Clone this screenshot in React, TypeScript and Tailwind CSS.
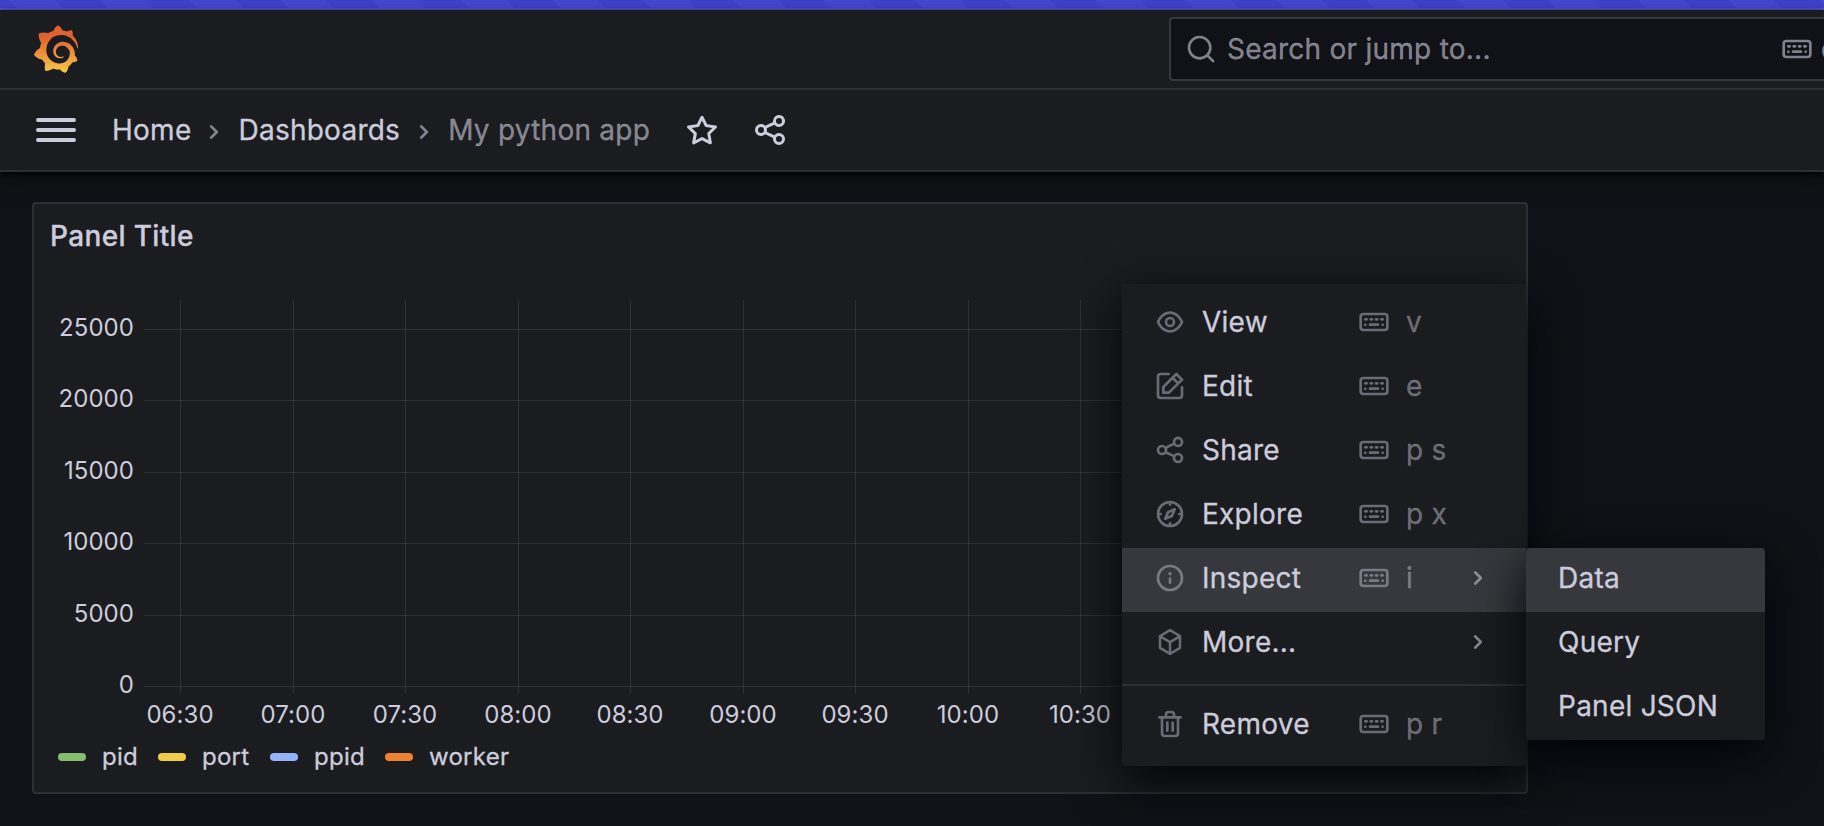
import React from "react";

const ICONS: Record<string, string> = {
  star: "M22,9.67A1,1,0,0,0,21.14,9l-5.69-.83L12.9,3a1,1,0,0,0-1.8,0L8.55,8.16,2.86,9a1,1,0,0,0-.81.68,1,1,0,0,0,.25,1l4.13,4-1,5.68A1,1,0,0,0,6.9,21.44L12,18.77l5.1,2.67a.93.93,0,0,0,.46.12,1,1,0,0,0,.59-.19,1,1,0,0,0,.4-1l-1-5.68,4.13-4A1,1,0,0,0,22,9.67Zm-6.15,4a1,1,0,0,0-.29.88l.72,4.2-3.76-2a1.06,1.06,0,0,0-.94,0l-3.76,2,.72-4.2a1,1,0,0,0-.29-.88l-3-3,4.21-.61a1,1,0,0,0,.76-.55L12,5.7l1.88,3.82a1,1,0,0,0,.76.55l4.21.61Z",
  share: "M18,14a4,4,0,0,0-3.08,1.48l-5.1-2.35a3.64,3.64,0,0,0,0-2.26l5.1-2.35A4,4,0,1,0,14,6a4.17,4.17,0,0,0,.07.71L8.79,9.14a4,4,0,1,0,0,5.72l5.28,2.43A4.17,4.17,0,0,0,14,18a4,4,0,1,0,4-4ZM18,4a2,2,0,1,1-2,2A2,2,0,0,1,18,4ZM6,14a2,2,0,1,1,2-2A2,2,0,0,1,6,14Zm12,6a2,2,0,1,1,2-2A2,2,0,0,1,18,20Z",
  search: "M21.71,20.29,18,16.61A9,9,0,1,0,16.61,18l3.68,3.68a1,1,0,0,0,1.42,0A1,1,0,0,0,21.71,20.29ZM11,18a7,7,0,1,1,7-7A7,7,0,0,1,11,18Z",
  angle: "M14.83,11.29,10.59,7.05a1,1,0,0,0-1.42,0,1,1,0,0,0,0,1.41L12.71,12,9.17,15.54a1,1,0,0,0,0,1.41,1,1,0,0,0,.71.29,1,1,0,0,0,.71-.29l4.24-4.24A1,1,0,0,0,14.83,11.29Z",
  eye: "M21.92,11.6C19.9,6.91,16.1,4,12,4S4.1,6.91,2.08,11.6a1,1,0,0,0,0,.8C4.1,17.09,7.9,20,12,20s7.9-2.91,9.92-7.6A1,1,0,0,0,21.92,11.6ZM12,18c-3.17,0-6.17-2.29-7.9-6C5.83,8.29,8.83,6,12,6s6.17,2.29,7.9,6C18.17,15.71,15.17,18,12,18ZM12,8a4,4,0,1,0,4,4A4,4,0,0,0,12,8Zm0,6a2,2,0,1,1,2-2A2,2,0,0,1,12,14Z",
  edit: "M21,12a1,1,0,0,0-1,1v6a1,1,0,0,1-1,1H5a1,1,0,0,1-1-1V5A1,1,0,0,1,5,4h6a1,1,0,0,0,0-2H5A3,3,0,0,0,2,5V19a3,3,0,0,0,3,3H19a3,3,0,0,0,3-3V13A1,1,0,0,0,21,12ZM6,12.76V17a1,1,0,0,0,1,1h4.24a1,1,0,0,0,.71-.29l6.92-6.93h0L21.71,8a1,1,0,0,0,0-1.42L17.47,2.29a1,1,0,0,0-1.42,0L13.23,5.12h0L6.29,12.05A1,1,0,0,0,6,12.76ZM16.76,4.41l2.83,2.83L18.17,8.66,15.34,5.83ZM8,13.17l5.93-5.93,2.83,2.83L10.83,16H8Z",
  compass: "M12,2A10,10,0,1,0,22,12,10,10,0,0,0,12,2Zm1,17.93V19a1,1,0,0,0-2,0v.93A8,8,0,0,1,4.07,13H5a1,1,0,0,0,0-2H4.07A8,8,0,0,1,11,4.07V5a1,1,0,0,0,2,0V4.07A8,8,0,0,1,19.93,11H19a1,1,0,0,0,0,2h.93A8,8,0,0,1,13,19.93ZM15.14,7.55l-5,2.12a1,1,0,0,0-.52.52l-2.12,5a1,1,0,0,0,.21,1.1,1,1,0,0,0,.7.29.93.93,0,0,0,.4-.09l5-2.12a1,1,0,0,0,.52-.52l2.12-5a1,1,0,0,0-1.31-1.31Zm-2.49,5.1-2.28,1,1-2.28,2.28-1Z",
  info: "M12,2A10,10,0,1,0,22,12,10.01114,10.01114,0,0,0,12,2Zm0,18a8,8,0,1,1,8-8A8.00917,8.00917,0,0,1,12,20Zm0-8.5a1,1,0,0,0-1,1v3a1,1,0,0,0,2,0v-3A1,1,0,0,0,12,11.5Zm0-4a1.25,1.25,0,1,0,1.25,1.25A1.25,1.25,0,0,0,12,7.5Z",
  trash: "M10,18a1,1,0,0,0,1-1V11a1,1,0,0,0-2,0v6A1,1,0,0,0,10,18ZM20,6H16V5a3,3,0,0,0-3-3H11A3,3,0,0,0,8,5V6H4A1,1,0,0,0,4,8H5V19a3,3,0,0,0,3,3h8a3,3,0,0,0,3-3V8h1a1,1,0,0,0,0-2ZM10,5a1,1,0,0,1,1-1h2a1,1,0,0,1,1,1V6H10Zm7,14a1,1,0,0,1-1,1H8a1,1,0,0,1-1-1V8H17Zm-3-1a1,1,0,0,0,1-1V11a1,1,0,0,0-2,0v6A1,1,0,0,0,14,18Z",
  keyboard: "M6.21,13.29a.93.93,0,0,0-.33-.21,1,1,0,0,0-.76,0,.9.9,0,0,0-.54.54,1,1,0,1,0,1.84,0A1,1,0,0,0,6.21,13.29ZM13.5,11h1a1,1,0,0,0,0-2h-1a1,1,0,0,0,0,2Zm-4,0h1a1,1,0,0,0,0-2h-1a1,1,0,0,0,0,2Zm-3-2h-1a1,1,0,0,0,0,2h1a1,1,0,0,0,0-2ZM20,5H4A3,3,0,0,0,1,8v8a3,3,0,0,0,3,3H20a3,3,0,0,0,3-3V8A3,3,0,0,0,20,5Zm1,11a1,1,0,0,1-1,1H4a1,1,0,0,1-1-1V8A1,1,0,0,1,4,7H20a1,1,0,0,1,1,1Zm-6-3H9a1,1,0,0,0,0,2h6a1,1,0,0,0,0-2Zm3.5-4h-1a1,1,0,0,0,0,2h1a1,1,0,0,0,0-2Zm.71,4.29a1,1,0,0,0-.33-.21,1,1,0,0,0-.76,0,.93.93,0,0,0-.33.21,1,1,0,0,0-.21.33A1,1,0,1,0,19.5,14a.84.84,0,0,0-.08-.38A1,1,0,0,0,19.21,13.29Z",
};

function Icon({ name, className }: { name: string; className: string }) {
  if (name === "cube") {
    return (
      <svg
        viewBox="0 0 24 24"
        fill="none"
        stroke="currentColor"
        strokeWidth="1.9"
        strokeLinecap="round"
        strokeLinejoin="round"
        className={`shrink-0 ${className}`}
      >
        <path d="M12,3.1L19.5,7.6V16.4L12,20.9L4.5,16.4V7.6ZM4.7,7.8L12,12.1L19.3,7.8M12,12.1V20.6" />
      </svg>
    );
  }
  return (
    <svg viewBox="0 0 24 24" fill="currentColor" className={`shrink-0 ${className}`}>
      <path d={ICONS[name]} />
    </svg>
  );
}

function Logo() {
  return (
    <svg viewBox="0 0 351 365" className="size-12">
      <defs>
        <linearGradient id="flame" gradientUnits="userSpaceOnUse" x1="175.5" x2="175.5" y1="400" y2="95">
          <stop offset="0" stopColor="#f8d849" />
          <stop offset="1" stopColor="#e2622f" />
        </linearGradient>
      </defs>
      <path
        fill="url(#flame)"
        d="M342,161.2c-0.6-6.1-1.6-13.1-3.6-20.9c-2-7.7-5-16.2-9.4-25c-4.4-8.8-10.1-17.9-17.5-26.8c-2.9-3.5-6.1-6.9-9.5-10.2c5.1-20.3-6.2-37.9-6.2-37.9c-19.5-1.2-31.9,6.1-36.5,9.4c-0.8-0.3-1.5-0.7-2.3-1c-3.3-1.3-6.7-2.6-10.3-3.7c-3.5-1.1-7.1-2.1-10.8-3c-3.7-0.9-7.4-1.6-11.2-2.2c-0.7-0.1-1.3-0.2-2-0.3c-8.5-27.2-32.9-38.6-32.9-38.6c-27.3,17.3-32.4,41.5-32.4,41.5s-0.1,0.5-0.3,1.4c-1.5,0.4-3,0.9-4.5,1.3c-2.1,0.6-4.2,1.4-6.2,2.2c-2.1,0.8-4.1,1.6-6.2,2.5c-4.1,1.8-8.2,3.8-12.2,6c-3.9,2.2-7.7,4.6-11.4,7.1c-0.5-0.2-1-0.4-1-0.4c-37.8-14.4-71.3,2.9-71.3,2.9c-3.1,40.2,15.1,65.5,18.7,70.1c-0.9,2.5-1.7,5-2.5,7.5c-2.8,9.1-4.9,18.4-6.2,28.1c-0.2,1.4-0.4,2.8-0.5,4.2C18.8,192.7,8.5,228,8.5,228c29.1,33.5,63.1,35.6,63.1,35.6c0,0,0.1-0.1,0.1-0.1c4.3,7.7,9.3,15,14.9,21.9c2.4,2.9,4.8,5.6,7.4,8.3c-10.6,30.4,1.5,55.6,1.5,55.6c32.4,1.2,53.7-14.2,58.2-17.7c3.2,1.1,6.5,2.1,9.8,2.9c10,2.6,20.2,4.1,30.4,4.5c2.5,0.1,5.1,0.2,7.6,0.1l1.2,0l0.8,0l1.6,0l1.6-0.1l0,0.1c15.3,21.8,42.1,24.9,42.1,24.9c19.1-20.1,20.2-40.1,20.2-44.4l0,0c0,0,0-0.1,0-0.3c0-0.4,0-0.6,0-0.6l0,0c0-0.3,0-0.6,0-0.9c4-2.8,7.8-5.8,11.4-9.1c7.6-6.9,14.3-14.8,19.9-23.3c0.5-0.8,1-1.6,1.5-2.4c21.6,1.2,36.9-13.4,36.9-13.4c-3.6-22.5-16.4-33.5-19.1-35.6l0,0c0,0-0.1-0.1-0.3-0.2c-0.2-0.1-0.2-0.2-0.2-0.2c0,0,0,0,0,0c-0.1-0.1-0.3-0.2-0.5-0.3c0.1-1.4,0.2-2.7,0.3-4.1c0.2-2.4,0.2-4.9,0.2-7.3l0-1.8l0-0.9l0-0.5c0-0.6,0-0.4,0-0.6l-0.1-1.5l-0.1-2c0-0.7-0.1-1.3-0.2-1.9c-0.1-0.6-0.1-1.3-0.2-1.9l-0.2-1.9l-0.3-1.9c-0.4-2.5-0.8-4.9-1.4-7.4c-2.3-9.7-6.1-18.9-11-27.2c-5-8.3-11.2-15.6-18.3-21.8c-7-6.2-14.9-11.2-23.1-14.9c-8.3-3.7-16.9-6.1-25.5-7.2c-4.3-0.6-8.6-0.8-12.9-0.7l-1.6,0l-0.4,0c-0.1,0-0.6,0-0.5,0l-0.7,0l-1.6,0.1c-0.6,0-1.2,0.1-1.7,0.1c-2.2,0.2-4.4,0.5-6.5,0.9c-8.6,1.6-16.7,4.7-23.8,9c-7.1,4.3-13.3,9.6-18.3,15.6c-5,6-8.9,12.7-11.6,19.6c-2.7,6.9-4.2,14.1-4.6,21c-0.1,1.7-0.1,3.5-0.1,5.2c0,0.4,0,0.9,0,1.3l0.1,1.4c0.1,0.8,0.1,1.7,0.2,2.5c0.3,3.5,1,6.9,1.9,10.1c1.9,6.5,4.9,12.4,8.6,17.4c3.7,5,8.2,9.1,12.9,12.4c4.7,3.2,9.8,5.5,14.8,7c5,1.5,10,2.1,14.7,2.1c0.6,0,1.2,0,1.7,0c0.3,0,0.6,0,0.9,0c0.3,0,0.6,0,0.9-0.1c0.5,0,1-0.1,1.5-0.1c0.1,0,0.3,0,0.4-0.1l0.5-0.1c0.3,0,0.6-0.1,0.9-0.1c0.6-0.1,1.1-0.2,1.7-0.3c0.6-0.1,1.1-0.2,1.6-0.4c1.1-0.2,2.1-0.6,3.1-0.9c2-0.7,4-1.5,5.7-2.4c1.8-0.9,3.4-2,5-3c0.4-0.3,0.9-0.6,1.3-1c1.6-1.3,1.9-3.7,0.6-5.3c-1.1-1.4-3.1-1.8-4.7-0.9c-0.4,0.2-0.8,0.4-1.2,0.6c-1.4,0.7-2.8,1.3-4.3,1.8c-1.5,0.5-3.1,0.9-4.7,1.2c-0.8,0.1-1.6,0.2-2.5,0.3c-0.4,0-0.8,0.1-1.3,0.1c-0.4,0-0.9,0-1.2,0c-0.4,0-0.8,0-1.2,0c-0.5,0-1,0-1.5-0.1c0,0-0.3,0-0.1,0l-0.2,0l-0.3,0c-0.2,0-0.5,0-0.7-0.1c-0.5-0.1-0.9-0.1-1.4-0.2c-3.7-0.5-7.4-1.6-10.9-3.2c-3.6-1.6-7-3.8-10.1-6.6c-3.1-2.8-5.8-6.1-7.9-9.9c-2.1-3.8-3.6-8-4.3-12.4c-0.3-2.2-0.5-4.5-0.4-6.7c0-0.6,0.1-1.2,0.1-1.8c0,0.2,0-0.1,0-0.1l0-0.2l0-0.5c0-0.3,0.1-0.6,0.1-0.9c0.1-1.2,0.3-2.4,0.5-3.6c1.7-9.6,6.5-19,13.9-26.1c1.9-1.8,3.9-3.4,6-4.9c2.1-1.5,4.4-2.8,6.8-3.9c2.4-1.1,4.8-2,7.4-2.7c2.5-0.7,5.1-1.1,7.8-1.4c1.3-0.1,2.6-0.2,4-0.2c0.4,0,0.6,0,0.9,0l1.1,0l0.7,0c0.3,0,0,0,0.1,0l0.3,0l1.1,0.1c2.9,0.2,5.7,0.6,8.5,1.3c5.6,1.2,11.1,3.3,16.2,6.1c10.2,5.7,18.9,14.5,24.2,25.1c2.7,5.3,4.6,11,5.5,16.9c0.2,1.5,0.4,3,0.5,4.5l0.1,1.1l0.1,1.1c0,0.4,0,0.8,0,1.1c0,0.4,0,0.8,0,1.1l0,1l0,1.1c0,0.7-0.1,1.9-0.1,2.6c-0.1,1.6-0.3,3.3-0.5,4.9c-0.2,1.6-0.5,3.2-0.8,4.8c-0.3,1.6-0.7,3.2-1.1,4.7c-0.8,3.1-1.8,6.2-3,9.3c-2.4,6-5.6,11.8-9.4,17.1c-7.7,10.6-18.2,19.2-30.2,24.7c-6,2.7-12.3,4.7-18.8,5.7c-3.2,0.6-6.5,0.9-9.8,1l-0.6,0l-0.5,0l-1.1,0l-1.6,0l-0.8,0c0.4,0-0.1,0-0.1,0l-0.3,0c-1.8,0-3.5-0.1-5.3-0.3c-7-0.5-13.9-1.8-20.7-3.7c-6.7-1.9-13.2-4.6-19.4-7.8c-12.3-6.6-23.4-15.6-32-26.5c-4.3-5.4-8.1-11.3-11.2-17.4c-3.1-6.1-5.6-12.6-7.4-19.1c-1.8-6.6-2.9-13.3-3.4-20.1l-0.1-1.3l0-0.3l0-0.3l0-0.6l0-1.1l0-0.3l0-0.4l0-0.8l0-1.6l0-0.3c0,0,0,0.1,0-0.1l0-0.6c0-0.8,0-1.7,0-2.5c0.1-3.3,0.4-6.8,0.8-10.2c0.4-3.4,1-6.9,1.7-10.3c0.7-3.4,1.5-6.8,2.5-10.2c1.9-6.7,4.3-13.2,7.1-19.3c5.7-12.2,13.1-23.1,22-31.8c2.2-2.2,4.5-4.2,6.9-6.2c2.4-1.9,4.9-3.7,7.5-5.4c2.5-1.7,5.2-3.2,7.9-4.6c1.3-0.7,2.7-1.4,4.1-2c0.7-0.3,1.4-0.6,2.1-0.9c0.7-0.3,1.4-0.6,2.1-0.9c2.8-1.2,5.7-2.2,8.7-3.1c0.7-0.2,1.5-0.4,2.2-0.7c0.7-0.2,1.5-0.4,2.2-0.6c1.5-0.4,3-0.8,4.5-1.1c0.7-0.2,1.5-0.3,2.3-0.5c0.8-0.2,1.5-0.3,2.3-0.5c0.8-0.1,1.5-0.3,2.3-0.4l1.1-0.2l1.2-0.2c0.8-0.1,1.5-0.2,2.3-0.3c0.9-0.1,1.7-0.2,2.6-0.3c0.7-0.1,1.9-0.2,2.6-0.3c0.5-0.1,1.1-0.1,1.6-0.2l1.1-0.1l0.5-0.1l0.6,0c0.9-0.1,1.7-0.1,2.6-0.2l1.3-0.1c0,0,0.5,0,0.1,0l0.3,0l0.6,0c0.7,0,1.5-0.1,2.2-0.1c2.9-0.1,5.9-0.1,8.8,0c5.8,0.2,11.5,0.9,17,1.9c11.1,2.1,21.5,5.6,31,10.3c9.5,4.6,17.9,10.3,25.3,16.5c0.5,0.4,0.9,0.8,1.4,1.2c0.4,0.4,0.9,0.8,1.3,1.2c0.9,0.8,1.7,1.6,2.6,2.4c0.9,0.8,1.7,1.6,2.5,2.4c0.8,0.8,1.6,1.6,2.4,2.5c3.1,3.3,6,6.6,8.6,10c5.2,6.7,9.4,13.5,12.7,19.9c0.2,0.4,0.4,0.8,0.6,1.2c0.2,0.4,0.4,0.8,0.6,1.2c0.4,0.8,0.8,1.6,1.1,2.4c0.4,0.8,0.7,1.5,1.1,2.3c0.3,0.8,0.7,1.5,1,2.3c1.2,3,2.4,5.9,3.3,8.6c1.5,4.4,2.6,8.3,3.5,11.7c0.3,1.4,1.6,2.3,3,2.1c1.5-0.1,2.6-1.3,2.6-2.8C342.6,170.4,342.5,166.1,342,161.2z"
      />
    </svg>
  );
}

const yTicks = [
  { label: "25000", y: 329 },
  { label: "20000", y: 400 },
  { label: "15000", y: 472 },
  { label: "10000", y: 543 },
  { label: "5000", y: 615 },
  { label: "0", y: 686 },
];

const xTicks = [
  { label: "06:30", x: 180 },
  { label: "07:00", x: 293 },
  { label: "07:30", x: 405 },
  { label: "08:00", x: 518 },
  { label: "08:30", x: 630 },
  { label: "09:00", x: 743 },
  { label: "09:30", x: 855 },
  { label: "10:00", x: 968 },
  { label: "10:30", x: 1080 },
];

function Chart() {
  return (
    <svg viewBox="34 268 1492 464" className="h-[464px] w-[1492px] shrink-0">
      <g fill="rgba(240,250,255,0.09)">
        {yTicks.map((t) => (
          <rect key={t.y} x={144} y={t.y} width={1366} height={1} />
        ))}
        {xTicks.map((t) => (
          <rect key={t.x} x={t.x} y={300} width={1} height={394} />
        ))}
      </g>
      <g className="fill-[#ccccdc] text-[24px] tracking-[0.05px]">
        {yTicks.map((t) => (
          <text key={t.label} x={134} y={t.y + 7} textAnchor="end">
            {t.label}
          </text>
        ))}
        {xTicks.map((t) => (
          <text key={t.label} x={t.x} y={722.5} textAnchor="middle">
            {t.label}
          </text>
        ))}
      </g>
    </svg>
  );
}

const legend = [
  { label: "pid", color: "bg-[#86be71]", width: "w-[100px]" },
  { label: "port", color: "bg-[#f0cd45]", width: "w-[112px]" },
  { label: "ppid", color: "bg-[#92b3fa]", width: "w-[115px]" },
  { label: "worker", color: "bg-[#ee812f]", width: "w-[140px]" },
];

function Legend() {
  return (
    <div className="flex h-[50px] items-center pl-6 text-[24px] leading-9">
      {legend.map((l) => (
        <div key={l.label} className={`flex items-center gap-4 ${l.width}`}>
          <span className={`h-2 w-7 shrink-0 rounded ${l.color}`} />
          <span>{l.label}</span>
        </div>
      ))}
    </div>
  );
}

type Item = { icon: string; label: string; keys?: string; sub?: boolean; active?: boolean };

const items: Item[] = [
  { icon: "eye", label: "View", keys: "v" },
  { icon: "edit", label: "Edit", keys: "e" },
  { icon: "share", label: "Share", keys: "p s" },
  { icon: "compass", label: "Explore", keys: "p x" },
  { icon: "info", label: "Inspect", keys: "i", sub: true, active: true },
  { icon: "cube", label: "More...", sub: true },
];

function MenuItem({ icon, label, keys, sub, active }: Item) {
  return (
    <div className={`flex h-16 items-center px-8 pb-1 ${active ? "bg-[#37383d]" : ""}`}>
      <Icon name={icon} className="size-8 text-[#ccccdc]/45" />
      <span className="ml-4 w-[156px] shrink-0">{label}</span>
      <span className="flex w-[110px] shrink-0 items-center gap-4 text-[#ccccdc]/45">
        {keys && (
          <>
            <Icon name="keyboard" className="size-8" />
            <span>{keys}</span>
          </>
        )}
      </span>
      {sub && <Icon name="angle" className="-ml-1.5 size-8 text-[#ccccdc]/60" />}
    </div>
  );
}

export default function App() {
  return (
    <div className="relative h-[826px] w-[1824px] overflow-hidden bg-[#111217] font-[Inter,sans-serif] text-[28px] leading-[44px] tracking-[0.25px] text-[#ccccdc] [-webkit-text-stroke:0.3px]">
      <div className="h-2.5 border-b-2 border-[#5456cf] bg-[repeating-linear-gradient(45deg,#3e41ca_0_12px,#4447cf_12px_44px,#3e41ca_44px_64px)]" />
      <header className="relative bg-[#1b1c1f] shadow-[0_1px_3px_#000,0_4px_8px_rgba(0,0,0,0.4),0_10px_20px_rgba(0,0,0,0.23)]">
        <div className="flex h-20 items-center justify-between border-b-2 border-[#2e2f34] pl-8">
          <Logo />
          <div className="flex h-16 w-[655px] items-center overflow-hidden rounded-l border-2 border-r-0 border-[#36373c] bg-[#111217] pl-3.5 text-[#ccccdc]/60">
            <Icon name="search" className="size-8" />
            <span className="ml-2.5 w-[554px] shrink-0">Search or jump to...</span>
            <Icon name="keyboard" className="size-8" />
            <span className="ml-2 shrink-0">cmd+k</span>
          </div>
        </div>
        <div className="flex h-[82px] items-center border-b-2 border-[#2e2f34] pl-9">
          <div className="flex w-10 flex-col gap-1.5">
            <span className="h-1 rounded-full bg-[#ccccdc]" />
            <span className="h-1 rounded-full bg-[#ccccdc]" />
            <span className="h-1 rounded-full bg-[#ccccdc]" />
          </div>
          <span className="ml-9">Home</span>
          <Icon name="angle" className="mt-[3px] ml-[7px] size-8 text-[#ccccdc]/60" />
          <span className="ml-2">Dashboards</span>
          <Icon name="angle" className="mt-[3px] ml-2 size-8 text-[#ccccdc]/60" />
          <span className="ml-2 text-[#ccccdc]/60">My python app</span>
          <Icon name="star" className="ml-[34px] size-9" />
          <Icon name="share" className="ml-8 size-9" />
        </div>
      </header>
      <main className="px-8 pt-[30px]">
        <section className="flex h-[592px] w-[1496px] flex-col rounded border-2 border-[#2e2f34] bg-[#1b1c1f]">
          <h2 className="flex h-16 shrink-0 items-center pl-4 font-medium tracking-[0.35px]">Panel Title</h2>
          <Chart />
          <Legend />
        </section>
      </main>
      <div className="absolute top-[284px] left-[1122px] h-[482px] w-[404px] rounded bg-[#1b1c1f] pt-2 shadow-[0_16px_48px_rgb(1,4,9)]">
        {items.map((it) => (
          <MenuItem key={it.label} {...it} />
        ))}
        <div className="my-2 h-0.5 bg-[#2e2f34]" />
        <MenuItem icon="trash" label="Remove" keys="p r" />
      </div>
      <div className="absolute top-[548px] left-[1526px] w-[239px] overflow-hidden rounded bg-[#1b1c1f] shadow-[0_16px_48px_rgb(1,4,9)]">
        <div className="flex h-16 items-center bg-[#37383d] pb-1 pl-8">Data</div>
        <div className="flex h-16 items-center pb-1 pl-8">Query</div>
        <div className="flex h-16 items-center pb-1 pl-8">Panel JSON</div>
      </div>
    </div>
  );
}
